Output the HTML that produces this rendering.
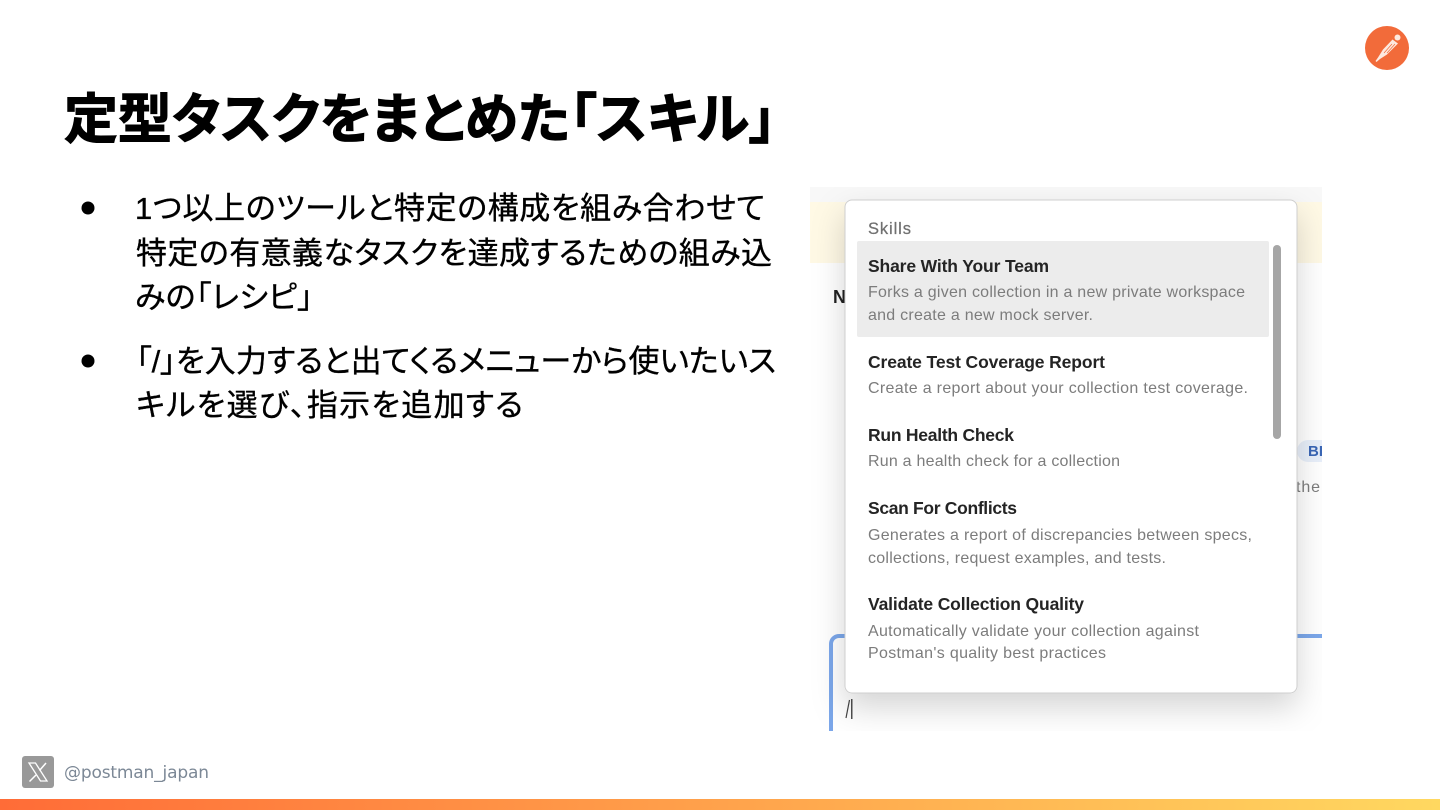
<!DOCTYPE html>
<html lang="ja"><head><meta charset="utf-8"><title>スキル</title>
<style>
html,body{margin:0;padding:0;background:#fff;width:1440px;height:810px;overflow:hidden}
svg{display:block}
.jp{font-family:"Liberation Sans","Noto Sans CJK JP",sans-serif;font-feature-settings:"palt";fill:#000}
.b{stroke:#000;stroke-width:.35px}
.t{font-family:"Liberation Sans",sans-serif;font-weight:700;font-size:17.5px;fill:#242424}
.d{font-family:"Liberation Sans",sans-serif;font-size:16px;fill:#7c7c7c}
</style></head><body>
<svg width="1440" height="810" viewBox="0 0 1440 810" xmlns="http://www.w3.org/2000/svg">
<defs>
<linearGradient id="g" x1="0" x2="1" y1="0" y2="0"><stop offset="0" stop-color="#ff6c37"/><stop offset="1" stop-color="#ffd860"/></linearGradient>
<filter id="sh" x="-20%" y="-20%" width="140%" height="140%"><feDropShadow dx="0" dy="14" stdDeviation="16" flood-color="#000" flood-opacity=".17"/></filter>
<clipPath id="shot"><rect x="810" y="187" width="512" height="544"/></clipPath>
</defs>
<rect width="1440" height="810" fill="#fff"/>

<text class="jp" x="64" y="138" font-size="54" font-weight="700" stroke="#000" stroke-width="1.1" textLength="712" lengthAdjust="spacing">定型タスクをまとめた「スキル」</text>

<circle cx="88" cy="208" r="6.5" fill="#000"/>
<circle cx="88" cy="361" r="6.5" fill="#000"/>
<g font-size="31">
<text class="jp b" x="135" y="219" textLength="630" lengthAdjust="spacing">1つ以上のツールと特定の構成を組み合わせて</text>
<text class="jp b" x="136" y="264" textLength="636" lengthAdjust="spacing">特定の有意義なタスクを達成するための組み込</text>
<text class="jp b" x="135" y="308" textLength="178" lengthAdjust="spacing">みの「レシピ」</text>
<text class="jp b" x="136" y="372" textLength="640" lengthAdjust="spacing">「/」を入力すると出てくるメニューから使いたいス</text>
<text class="jp b" x="136" y="416" textLength="387" lengthAdjust="spacing">キルを選び、指示を追加する</text>
</g>

<circle cx="1387" cy="48" r="22" fill="#f26b3a"/>
<g fill="#fde9df">
<circle cx="1397.500" cy="37.500" r="3"/>
<path d="M1392.500 39.500 L1398 43.500 L1387 54.500 L1380 59 L1376.500 62 L1375.500 61 L1378 57.500 L1383 49.500 Z"/>
</g>
<path d="M1392 44 L1384 53 M1395 44 L1387 53" stroke="#f26b3a" stroke-width=".7" fill="none"/>

<g clip-path="url(#shot)">
<rect x="810" y="187" width="512" height="544" fill="#fff"/>
<rect x="810" y="187" width="512" height="15" fill="#f8f8f8"/>
<rect x="810" y="202" width="512" height="61" fill="#fff9e5"/>
<text x="833" y="303" font-family="Liberation Sans,sans-serif" font-weight="700" font-size="18" fill="#222">N</text>
<rect x="1297" y="440" width="40" height="22" rx="11" fill="#e8effa"/>
<text x="1308" y="456" font-family="Liberation Sans,sans-serif" font-weight="700" font-size="15" fill="#3a66b5">BETA</text>
<text x="1296" y="492" font-family="Liberation Sans,sans-serif" font-size="16" fill="#7c7c7c" textLength="24" lengthAdjust="spacing">the</text>
<rect x="831" y="636" width="560" height="140" rx="8" fill="none" stroke="#7ba7ea" stroke-width="4"/>
<path d="M846 718 L849.500 700" stroke="#444" stroke-width="1.200" fill="none"/>
<path d="M851.800 699 V719" stroke="#222" stroke-width="1.200" fill="none"/>
<rect x="845" y="200" width="452" height="493" rx="7" fill="#fff" stroke="#cfcfcf" stroke-width="1" filter="url(#sh)"/>
<text x="868" y="234" font-family="Liberation Sans,sans-serif" font-size="16.500" fill="#707070" stroke="#707070" stroke-width=".25" textLength="43" lengthAdjust="spacing">Skills</text>
<rect x="857" y="241" width="412" height="96" rx="2" fill="#ececec"/>
<rect x="1273" y="245" width="8" height="194" rx="4" fill="#a6a6a6"/>

<text class="t" x="868" y="272" textLength="181" lengthAdjust="spacing">Share With Your Team</text>
<text class="d" x="868" y="297" textLength="377" lengthAdjust="spacing">Forks a given collection in a new private workspace</text>
<text class="d" x="868" y="320" textLength="225" lengthAdjust="spacing">and create a new mock server.</text>

<text class="t" x="868" y="368" textLength="237" lengthAdjust="spacing">Create Test Coverage Report</text>
<text class="d" x="868" y="393" textLength="380" lengthAdjust="spacing">Create a report about your collection test coverage.</text>

<text class="t" x="868" y="441" textLength="146" lengthAdjust="spacing">Run Health Check</text>
<text class="d" x="868" y="466" textLength="252" lengthAdjust="spacing">Run a health check for a collection</text>

<text class="t" x="868" y="514" textLength="149" lengthAdjust="spacing">Scan For Conflicts</text>
<text class="d" x="868" y="540" textLength="384" lengthAdjust="spacing">Generates a report of discrepancies between specs,</text>
<text class="d" x="868" y="563" textLength="298" lengthAdjust="spacing">collections, request examples, and tests.</text>

<text class="t" x="868" y="610" textLength="216" lengthAdjust="spacing">Validate Collection Quality</text>
<text class="d" x="868" y="636" textLength="331" lengthAdjust="spacing">Automatically validate your collection against</text>
<text class="d" x="868" y="658" textLength="238" lengthAdjust="spacing">Postman's quality best practices</text>
</g>

<rect x="22" y="756" width="32" height="32" rx="3" fill="#999"/>
<path d="M29 763 H35.500 L47 781 H40.500 Z" fill="none" stroke="#fff" stroke-width="1.300"/>
<path d="M46 763 L39.500 770.500 M36 775 L29.500 781.500" stroke="#fff" stroke-width="1.500" fill="none"/>
<text x="64" y="778" font-family="DejaVu Sans,sans-serif" font-size="17" fill="#7c8896" textLength="145" lengthAdjust="spacing">@postman_japan</text>

<rect x="0" y="799" width="1440" height="11" fill="url(#g)"/>
</svg>
</body></html>
